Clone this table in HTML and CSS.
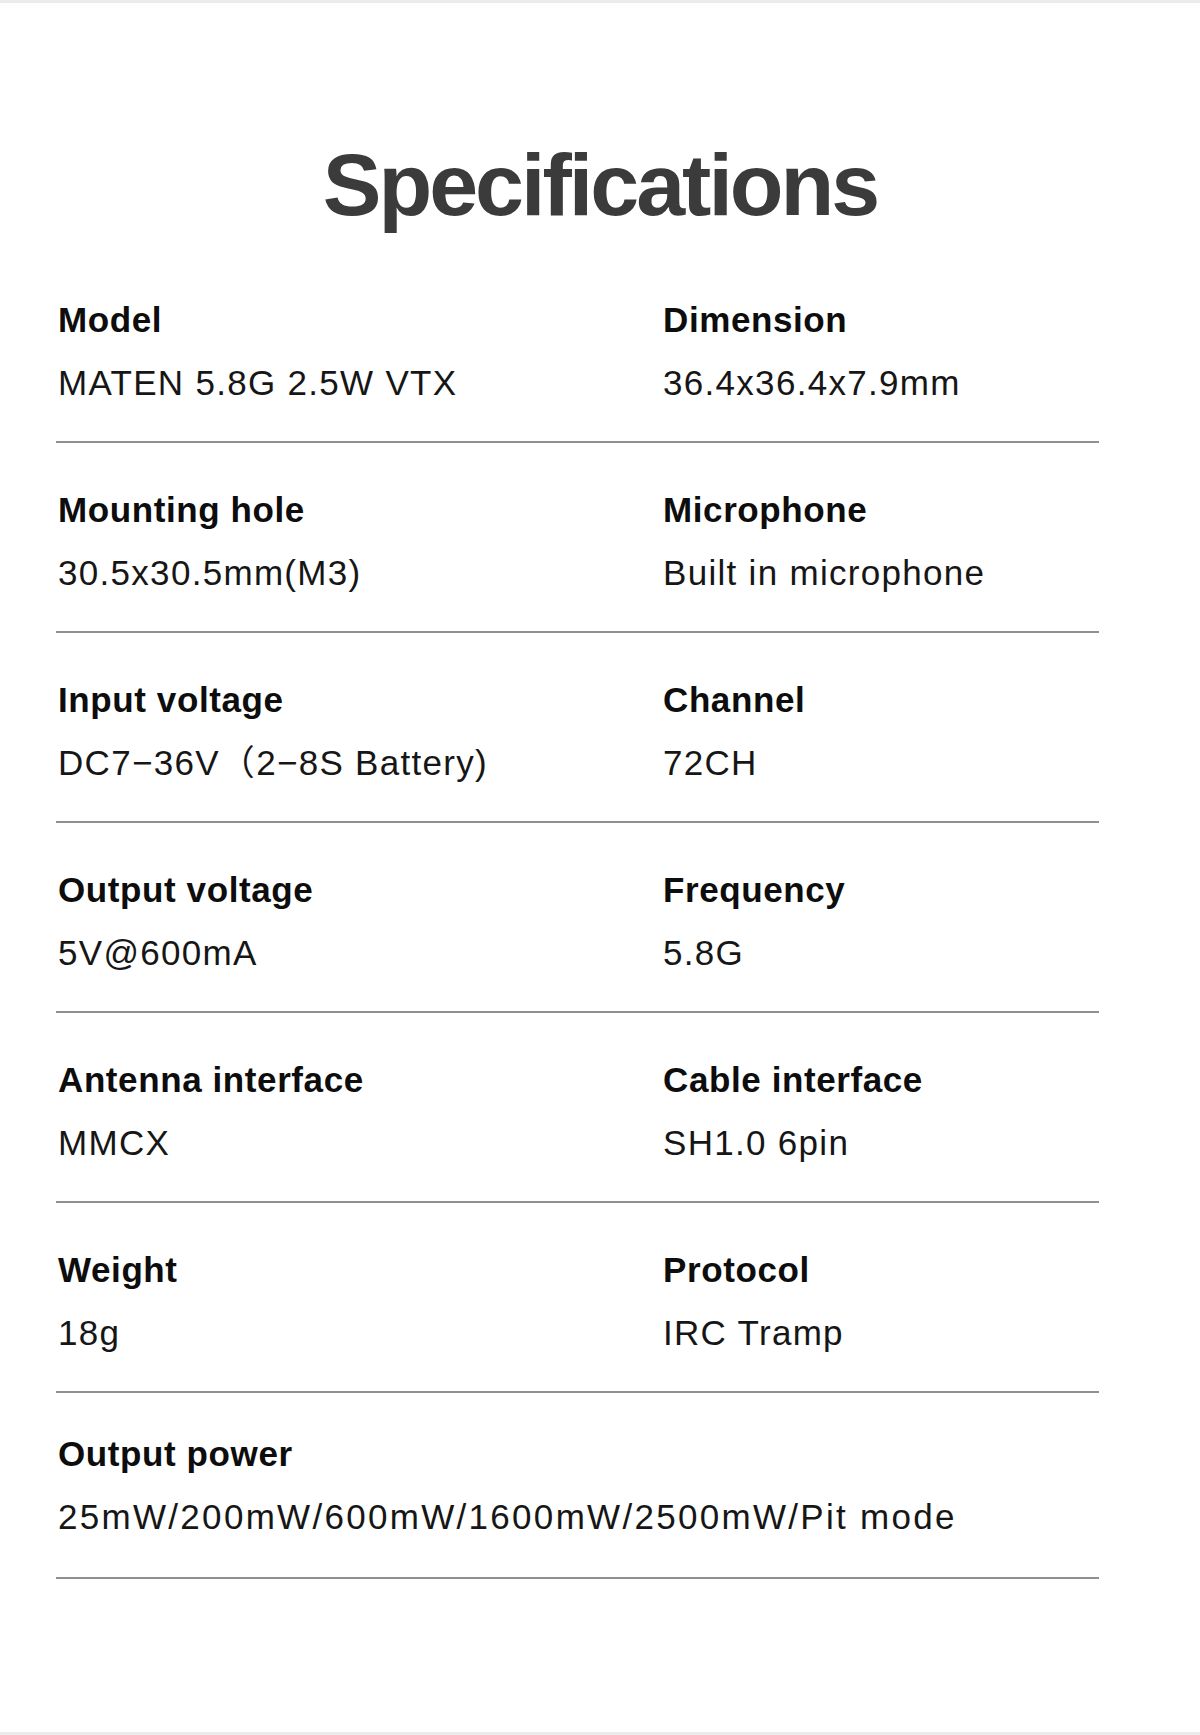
FILE: index.html
```html
<!DOCTYPE html>
<html lang="en">
<head>
<meta charset="utf-8">
<title>Specifications</title>
<link rel="stylesheet" href="styles.css">
</head>
<body>
<div class="topbar"></div>
<h1 class="title">Specifications</h1>
<div class="specs">
  <div class="row">
    <div class="item"><div class="label">Model</div><div class="value">MATEN 5.8G 2.5W VTX</div></div>
    <div class="item"><div class="label">Dimension</div><div class="value">36.4x36.4x7.9mm</div></div>
  </div>
  <div class="row">
    <div class="item"><div class="label">Mounting hole</div><div class="value">30.5x30.5mm(M3)</div></div>
    <div class="item"><div class="label">Microphone</div><div class="value">Built in microphone</div></div>
  </div>
  <div class="row">
    <div class="item"><div class="label">Input voltage</div><div class="value">DC7−36V（2−8S Battery)</div></div>
    <div class="item"><div class="label">Channel</div><div class="value">72CH</div></div>
  </div>
  <div class="row">
    <div class="item"><div class="label">Output voltage</div><div class="value">5V@600mA</div></div>
    <div class="item"><div class="label">Frequency</div><div class="value">5.8G</div></div>
  </div>
  <div class="row">
    <div class="item"><div class="label">Antenna interface</div><div class="value">MMCX</div></div>
    <div class="item"><div class="label">Cable interface</div><div class="value">SH1.0 6pin</div></div>
  </div>
  <div class="row">
    <div class="item"><div class="label">Weight</div><div class="value">18g</div></div>
    <div class="item"><div class="label">Protocol</div><div class="value">IRC Tramp</div></div>
  </div>
  <div class="row row-single">
    <div class="item"><div class="label">Output power</div><div class="value value-wide">25mW/200mW/600mW/1600mW/2500mW/Pit mode</div></div>
  </div>
</div>
<div class="bottombar"></div>
</body>
</html>
```
FILE: styles.css
```css
html, body {
  margin: 0;
  padding: 0;
  background: #ffffff;
}
body {
  width: 1200px;
  height: 1735px;
  display: flex;
  flex-direction: column;
  font-family: "Liberation Sans", "Noto Sans CJK SC", Arial, sans-serif;
  color: #111111;
}
.topbar {
  height: 3px;
  background: #ebebeb;
}
.title {
  margin: 132px 0 0;
  font-size: 88px;
  line-height: 100px;
  font-weight: 700;
  letter-spacing: -3px;
  text-align: center;
  color: #3b3b3b;
}
.specs {
  margin: 18px 0 0 56px;
  width: 1043px;
}
.row {
  display: grid;
  grid-template-columns: 605px 1fr;
  padding: 47px 0 38px;
  border-bottom: 2px solid #8f8f8f;
}
.row-single {
  grid-template-columns: 1fr;
  padding: 41px 0 40px;
}
.item {
  padding-left: 2px;
}
.label {
  font-size: 35px;
  line-height: 40px;
  font-weight: 700;
  letter-spacing: 0.6px;
  color: #0d0d0d;
}
.value {
  margin-top: 23px;
  font-size: 35px;
  line-height: 40px;
  font-weight: 400;
  letter-spacing: 1.3px;
  color: #161616;
}
.value-wide {
  letter-spacing: 2.3px;
}
.bottombar {
  margin-top: auto;
  height: 3px;
  background: #ebebeb;
}
```
